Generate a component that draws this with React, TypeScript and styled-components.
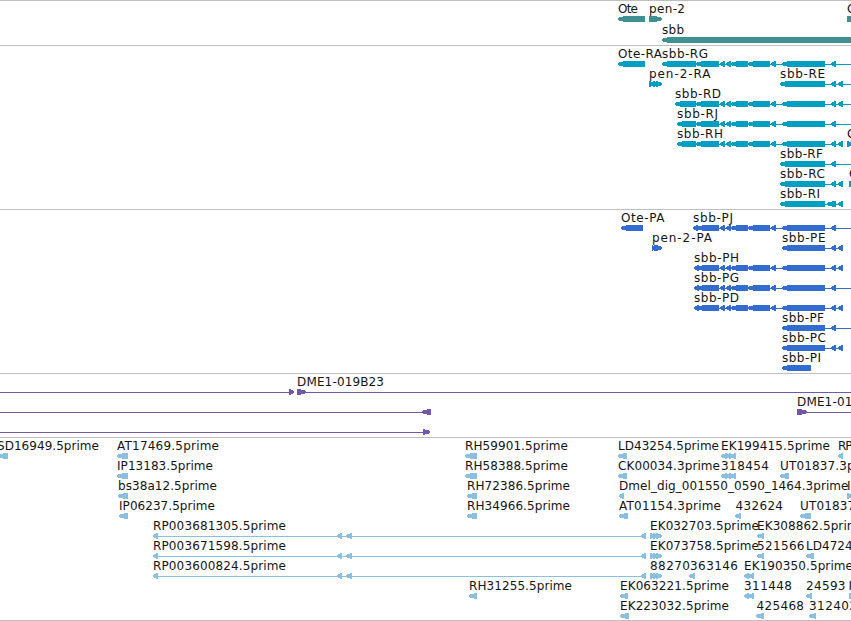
import React from 'react'
import styled, { createGlobalStyle } from 'styled-components'

const GlobalStyle = createGlobalStyle`
  body {
    margin: 0;
    background: #fff;
    overflow: hidden;
  }
`

const Browser = styled.main`
  display: flex;
  flex-direction: column;
  width: 851px;
  height: 621px;
  overflow: hidden;
  border-bottom: 1px solid #bebebe;
  box-sizing: border-box;
`

const TrackPanel = styled.section<{ $height: number }>`
  height: ${({ $height }) => $height}px;
  flex: none;
  box-sizing: border-box;
  border-top: 1px solid #bebebe;
  overflow: hidden;
`

const Canvas = styled.svg`
  display: block;
  width: 100%;
  height: 100%;
`

const Label = styled.text`
  font-family: 'DejaVu Sans', sans-serif;
  font-size: 12px;
  fill: #141414;
`

type Span = [number, number]

interface Feature {
  row: number
  name?: string
  // left and right edge of the name
  text?: Span
  blocks: Span[]
  line?: Span
  forward?: boolean
}

interface TrackProps {
  color: string
  height: number
  pitch?: number
  features: Feature[]
}

const HEAD = 7

// rounded bullet head for long blocks, plain triangle for the short ones
const blockPath = ([a, b]: Span, forward?: boolean) => {
  const head = Math.min(HEAD, b - a)
  const tip = forward ? b : a
  const tail = forward ? a : b
  const dir = forward ? -1 : 1
  const mid = tip + dir * head * 0.4
  const neck = tip + dir * head
  return `M${tip} 2L${mid} 0.9L${neck} 0H${tail}V6H${neck}L${mid} 5.1L${tip} 4Z`
}

const Track: React.FunctionComponent<TrackProps> = ({ color, height, pitch = 20, features }) => (
  <TrackPanel $height={height}>
    <Canvas>
      {features.map((f, i) => (
        <g key={i} transform={`translate(0 ${f.row * pitch})`}>
          {f.line && <rect x={f.line[0]} y={18} width={f.line[1] - f.line[0]} height={1} fill={color} />}
          {f.blocks.map((b) => (
            <path key={b[0]} d={blockPath(b, f.forward)} transform="translate(0 15)" fill={color} shapeRendering="crispEdges" />
          ))}
          {f.name && f.text && (
            <Label x={f.text[0] - 0.5} y={12} textLength={f.text[1] - f.text[0] + 1}>{f.name}</Label>
          )}
        </g>
      ))}
    </Canvas>
  </TrackPanel>
)

const genes: Feature[] = [
  { row: 0, name: 'Ote', text: [618.5, 637.5], blocks: [[618, 645]] },
  { row: 0, name: 'pen-2', text: [649.5, 684.5], blocks: [[649, 662]], forward: true },
  { row: 0, name: 'C', text: [847.5, 855], blocks: [[847, 870]], forward: true },
  { row: 1, name: 'sbb', text: [662.5, 683.5], blocks: [[662, 870]] },
]

const exons: Span[] = [[720, 725], [726, 731], [731, 748], [748, 770], [771, 776], [782, 825], [831, 836]]
const last: Span = [838, 843]

const transcripts: Feature[] = [
  { row: 0, name: 'Ote-RA', text: [618.5, 661.5], blocks: [[618, 645]] },
  { row: 0, name: 'sbb-RG', text: [662.5, 707.5], blocks: [[662, 696], [696, 719], ...exons], line: [719, 851] },
  { row: 1, name: 'pen-2-RA', text: [649.5, 710], blocks: [[649, 654], [653, 658], [656, 662]], forward: true },
  { row: 1, name: 'sbb-RE', text: [780.5, 824.5], blocks: [[780, 825], [831, 836], last], line: [825, 851] },
  { row: 2, name: 'sbb-RD', text: [675.5, 720.5], blocks: [[675, 696], [696, 719], ...exons, last], line: [719, 851] },
  { row: 3, name: 'sbb-RJ', text: [677.5, 717.5], blocks: [[677, 696], [696, 719], ...exons], line: [719, 851] },
  { row: 4, name: 'sbb-RH', text: [677.5, 722.5], blocks: [[677, 696], [696, 719], ...exons, last], line: [719, 843] },
  { row: 4, name: 'C', text: [847.5, 855], blocks: [[847, 852]], forward: true },
  { row: 5, name: 'sbb-RF', text: [780.5, 822.5], blocks: [[780, 825], [831, 836]], line: [825, 851] },
  { row: 6, name: 'sbb-RC', text: [780.5, 824.5], blocks: [[780, 825], [831, 836], last], line: [825, 843] },
  { row: 6, name: 'C', text: [849.5, 857], blocks: [[849, 854]], forward: true },
  { row: 7, name: 'sbb-RI', text: [780.5, 819.5], blocks: [[780, 825], [827, 836], last], line: [825, 843] },
]

const proteins: Feature[] = [
  { row: 0, name: 'Ote-PA', text: [621.5, 664], blocks: [[621, 643]] },
  { row: 0, name: 'sbb-PJ', text: [693.5, 732.5], blocks: [[693, 698], [697, 719], ...exons], line: [719, 851] },
  { row: 1, name: 'pen-2-PA', text: [652.5, 711.5], blocks: [[652, 656], [654, 659], [656, 662]], forward: true },
  { row: 1, name: 'sbb-PE', text: [782.5, 825], blocks: [[782, 825], [831, 836], last], line: [825, 843] },
  { row: 2, name: 'sbb-PH', text: [694.5, 738.5], blocks: [[694, 699], [697, 719], ...exons, last], line: [719, 843] },
  { row: 3, name: 'sbb-PG', text: [694.5, 738.5], blocks: [[694, 699], [697, 719], ...exons], line: [719, 851] },
  { row: 4, name: 'sbb-PD', text: [694.5, 738.5], blocks: [[694, 699], [697, 719], ...exons, last], line: [719, 843] },
  { row: 5, name: 'sbb-PF', text: [782.5, 823.5], blocks: [[782, 825], [831, 836]], line: [825, 851] },
  { row: 6, name: 'sbb-PC', text: [782.5, 825.5], blocks: [[782, 825], [831, 836], last], line: [825, 843] },
  { row: 7, name: 'sbb-PI', text: [782.5, 820.5], blocks: [[782, 811]] },
]

const clones: Feature[] = [
  { row: 0, blocks: [[289, 294]], line: [0, 289], forward: true },
  { row: 0, name: 'DME1-019B23', text: [297.5, 383.5], blocks: [[297, 306]], line: [297, 851], forward: true },
  { row: 1, blocks: [[422, 431]], line: [0, 423] },
  { row: 1, name: 'DME1-019B24', text: [797.5, 883.5], blocks: [[797, 807]], line: [797, 851], forward: true },
  { row: 2, blocks: [[423, 430]], line: [0, 423], forward: true },
]

const triple: Span[] = [[721, 727], [726, 731], [730, 736]]
const forwardTriple: Span[] = [[650, 655], [653, 658], [656, 662]]
const spliced: Span[] = [[153, 158], [337, 342], [346, 352], [641, 646]]

const ests: Feature[] = [
  { row: 0, name: 'SD16949.5prime', text: [-2.5, 98.5], blocks: [[-2, 8]] },
  { row: 0, name: 'AT17469.5prime', text: [117.5, 218.5], blocks: [[117, 128]] },
  { row: 1, name: 'IP13183.5prime', text: [117.5, 212.5], blocks: [[117, 128]] },
  { row: 2, name: 'bs38a12.5prime', text: [118.5, 216.5], blocks: [[118, 128]] },
  { row: 3, name: 'IP06237.5prime', text: [119.5, 214.5], blocks: [[119, 128]] },
  { row: 4, name: 'RP003681305.5prime', text: [153.5, 285.5], blocks: spliced, line: [153, 643] },
  { row: 5, name: 'RP003671598.5prime', text: [153.5, 285.5], blocks: spliced, line: [153, 643] },
  { row: 6, name: 'RP003600824.5prime', text: [153.5, 285.5], blocks: spliced, line: [153, 643] },
  { row: 0, name: 'RH59901.5prime', text: [465.5, 567.5], blocks: [[465, 477]] },
  { row: 1, name: 'RH58388.5prime', text: [465.5, 567.5], blocks: [[465, 477]] },
  { row: 2, name: 'RH72386.5prime', text: [467.5, 569.5], blocks: [[467, 477]] },
  { row: 3, name: 'RH34966.5prime', text: [467.5, 569.5], blocks: [[467, 477]] },
  { row: 7, name: 'RH31255.5prime', text: [469.5, 571.5], blocks: [[469, 477]] },
  { row: 0, name: 'LD43254.5prime', text: [618.5, 718.5], blocks: [[618, 627]] },
  { row: 0, name: 'EK199415.5prime', text: [721.5, 829.5], blocks: triple },
  { row: 0, name: 'RP', text: [838.5, 852], blocks: [[838, 843]] },
  { row: 1, name: 'CK00034.3prime', text: [618.5, 719.5], blocks: [[618, 627]] },
  { row: 1, name: '318454', text: [721.5, 768.5], blocks: triple },
  { row: 1, name: 'UT01837.3prime', text: [780.5, 882], blocks: [[780, 789]] },
  { row: 2, name: 'Dmel_dig_001550_0590_1464.3prime', text: [619.5, 848], blocks: [[619, 624]] },
  { row: 2, name: 'I', text: [847.5, 850], blocks: [[847, 852]], forward: true },
  { row: 3, name: 'AT01154.3prime', text: [619.5, 720.5], blocks: [[619, 628]] },
  { row: 3, name: '432624', text: [736, 782.5], blocks: [[735, 741]] },
  { row: 3, name: 'UT01837.5prime', text: [800.5, 902], blocks: [[800, 811]] },
  { row: 4, name: 'EK032703.5prime', text: [650.5, 758.5], blocks: forwardTriple, forward: true },
  { row: 4, name: 'EK308862.5prime', text: [757.5, 865.5], blocks: [[757, 764]] },
  { row: 5, name: 'EK073758.5prime', text: [650.5, 758.5], blocks: forwardTriple, forward: true },
  { row: 5, name: '521566', text: [757.5, 804], blocks: [[757, 764]] },
  { row: 5, name: 'LD47240.5prime', text: [806.5, 906.5], blocks: [[806, 814]] },
  { row: 6, name: '88270', text: [650.5, 689.5], blocks: forwardTriple, forward: true },
  { row: 6, name: '363146', text: [690.5, 737.5], blocks: [[689, 695]] },
  { row: 6, name: 'EK190350.5prime', text: [744.5, 852.5], blocks: [[744, 749], [748, 754]] },
  { row: 7, name: 'EK063221.5prime', text: [620.5, 728.5], blocks: [[620, 628]] },
  { row: 7, name: '311448', text: [744.5, 791.5], blocks: [[744, 749], [748, 754]] },
  { row: 7, name: '24593', text: [806.5, 845], blocks: [[806, 812]] },
  { row: 7, name: 'I', text: [849, 851], blocks: [[849, 854]], forward: true },
  { row: 8, name: 'EK223032.5prime', text: [620.5, 728.5], blocks: [[620, 629]] },
  { row: 8, name: '425468', text: [757, 803.5], blocks: [[756, 764]] },
  { row: 8, name: '312402', text: [809.5, 856.5], blocks: [[809, 816]] },
]

const App: React.FunctionComponent = () => (
  <>
    <GlobalStyle />
    <Browser>
      <Track color="#3f8f93" height={45} pitch={21} features={genes} />
      <Track color="#009fc1" height={164} features={transcripts} />
      <Track color="#326ccf" height={164} features={proteins} />
      <Track color="#7557a7" height={64} features={clones} />
      <Track color="#8abfe0" height={183} features={ests} />
    </Browser>
  </>
)

export default App
